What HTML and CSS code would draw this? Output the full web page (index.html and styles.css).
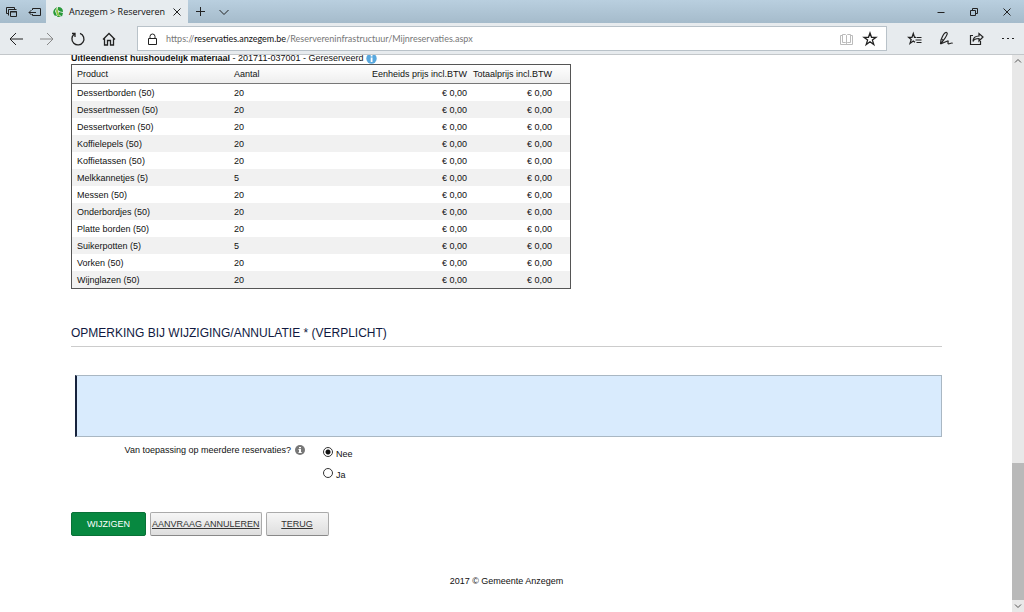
FILE: index.html
```html
<!DOCTYPE html>
<html lang="nl">
<head>
<meta charset="utf-8">
<title>Anzegem &gt; Reserveren</title>
<link rel="stylesheet" href="styles.css">
</head>
<body>
<div class="browser">
  <header class="tabbar">
    <div class="tabtools">
      <button class="icon" aria-label="Tabbladen"><svg width="14" height="14" viewBox="0 0 14 14"><path d="M1.500 8.500V2.500h8M3.500 10.500V4.500h8M3.500 8.500h-2M9.500 2.500v2M5.500 6.500h6v5h-6z"/><path d="M5 7h7"/></svg></button>
      <button class="icon" aria-label="Tabbladen opzij zetten"><svg width="14" height="14" viewBox="0 0 14 14"><path d="M4.500 5V3.500h8v7h-8V9M1 7.500h7M3.500 5L1 7.500 3.500 10"/></svg></button>
    </div>
    <div class="tab">
      <svg class="favicon" width="12" height="12" viewBox="0 0 12 12"><path fill="#28993a" d="M5 1L3 5 5 10 2.500 9.500Q-1 5 5 1zM6 1q5 0 5 5L8 5.500 6 4zM7 6l4 1-1 3.500-3-2zM6 9l3 2H5z"/><path fill="#8dc63f" d="M5 1l1 4 2 6-3-2-1-4z"/></svg>
      <span class="tabtitle">Anzegem &gt; Reserveren</span>
      <button class="icon" aria-label="Tabblad sluiten"><svg width="10" height="10" viewBox="0 0 10 10"><path d="M1.500 1.500l7 7M8.500 1.500l-7 7"/></svg></button>
    </div>
    <div class="tabactions">
      <button class="icon" aria-label="Nieuw tabblad"><svg width="12" height="12" viewBox="0 0 12 12"><path d="M5.500 1v9M1 5.500h9"/></svg></button>
      <button class="icon" aria-label="Tabbladvoorbeelden"><svg width="12" height="12" viewBox="0 0 12 12"><path d="M1.500 4L6 8.500 10.500 4"/></svg></button>
    </div>
    <div class="window-controls">
      <button class="icon" aria-label="Minimaliseren"><svg width="10" height="10" viewBox="0 0 10 10"><path d="M1.500 5.500h7"/></svg></button>
      <button class="icon" aria-label="Verkleinen"><svg width="10" height="10" viewBox="0 0 10 10"><path d="M1.500 3.500h5v5h-5zM3.500 3.500v-2h5v5h-2"/></svg></button>
      <button class="icon" aria-label="Sluiten"><svg width="10" height="10" viewBox="0 0 10 10"><path d="M1.500 1.500l7 7M8.500 1.500l-7 7"/></svg></button>
    </div>
  </header>
  <nav class="toolbar">
    <div class="navbuttons">
      <button class="icon" aria-label="Vorige"><svg width="16" height="16" viewBox="0 0 16 16"><path d="M15 8H2M8 2L2 8l6 6"/></svg></button>
      <button class="icon faded" aria-label="Volgende"><svg width="16" height="16" viewBox="0 0 16 16"><path d="M1 8h13M8 2l6 6-6 6"/></svg></button>
      <button class="icon" aria-label="Vernieuwen"><svg width="16" height="16" viewBox="0 0 16 16"><path stroke-width="1.300" d="M10 2.300a6 6 0 1 1-5.500.700M2 2.500h3V6"/></svg></button>
      <button class="icon" aria-label="Startpagina"><svg width="16" height="16" viewBox="0 0 16 16"><path stroke-width="1.300" d="M2 8.500L8 2.500l6 6M3.500 7v7h3V9.500h3V14h3V7"/></svg></button>
    </div>
    <div class="address">
      <svg class="lock" width="12" height="14" viewBox="0 0 12 14"><path d="M1.500 6.500h8v6h-8zM3 6.500V4.500a2.500 2.500 0 0 1 5 0v2"/></svg>
      <span class="url">https://<b>reservaties.anzegem.be</b>/Reservereninfrastructuur/Mijnreservaties.aspx</span>
      <button class="icon pale" aria-label="Leesweergave"><svg width="16" height="14" viewBox="0 0 16 14"><path d="M7.500 3.500L6.500 2.500h-3v8h3l1 1 1-1h3v-8h-3zM7.500 3.500v8M3.500 3.500h-2v9h12v-9h-2"/></svg></button>
      <button class="icon" aria-label="Favoriet"><svg width="16" height="16" viewBox="0 0 16 16"><path stroke-width="1.300" d="M8 2l1.500 4.300h4.500l-3.600 2.800 1.400 4.400L8 10.800l-3.800 2.700 1.400-4.400L2 6.300h4.500z"/></svg></button>
    </div>
    <div class="hub">
      <button class="icon" aria-label="Hub"><svg width="16" height="16" viewBox="0 0 16 16"><path stroke-width="1.200" d="M9 6.300H7.500L6.300 2.500 5 6.300H1.500l2.700 2.200-1.200 4 3.300-2.500 1.700 1.300M9.500 6.500h5M8.500 9h6M9.500 11.500h5"/></svg></button>
      <button class="icon" aria-label="Webnotitie"><svg width="16" height="16" viewBox="0 0 16 16"><path stroke-width="1.200" d="M2.500 13l.5-4Q6 1 8.500 1.500T5 10l-2.500 3 7-3q1-.5.5 1.500t2 1 2.500 0M4 8.500l2 1"/></svg></button>
      <button class="icon" aria-label="Delen"><svg width="16" height="16" viewBox="0 0 16 16"><path stroke-width="1.200" d="M4 4.500H1.500v9h10V10M4 10.500Q5 7.500 10 7.500V10l4-4-4-3.500V5Q4 5 4 10.500z"/></svg></button>
      <button class="icon" aria-label="Meer"><svg width="16" height="16" viewBox="0 0 16 16"><path stroke="none" fill="#222" d="M2 7h2v1H2zM7 7h2v1H7zM12 7h2v1h-2z"/></svg></button>
    </div>
  </nav>
  <div class="viewport">
    <main class="page">
      <div class="caption"><span><strong>Uitleendienst huishoudelijk materiaal</strong> - 201711-037001 - Gereserveerd</span><svg width="11" height="11" viewBox="0 0 11 11"><circle cx="5.500" cy="5.500" r="5.200" fill="#59a8de"/><path fill="#fff" d="M4.700 2h1.800v1.500H4.700zM4.700 4.500h1.800V9H4.700z"/></svg></div>
      <table class="products">
        <thead><tr><th class="name">Product</th><th class="count">Aantal</th><th class="unit">Eenheids prijs incl.BTW</th><th class="total">Totaalprijs incl.BTW</th></tr></thead>
        <tbody>
          <tr><td>Dessertborden (50)</td><td>20</td><td>€ 0,00</td><td>€ 0,00</td></tr>
          <tr><td>Dessertmessen (50)</td><td>20</td><td>€ 0,00</td><td>€ 0,00</td></tr>
          <tr><td>Dessertvorken (50)</td><td>20</td><td>€ 0,00</td><td>€ 0,00</td></tr>
          <tr><td>Koffielepels (50)</td><td>20</td><td>€ 0,00</td><td>€ 0,00</td></tr>
          <tr><td>Koffietassen (50)</td><td>20</td><td>€ 0,00</td><td>€ 0,00</td></tr>
          <tr><td>Melkkannetjes (5)</td><td>5</td><td>€ 0,00</td><td>€ 0,00</td></tr>
          <tr><td>Messen (50)</td><td>20</td><td>€ 0,00</td><td>€ 0,00</td></tr>
          <tr><td>Onderbordjes (50)</td><td>20</td><td>€ 0,00</td><td>€ 0,00</td></tr>
          <tr><td>Platte borden (50)</td><td>20</td><td>€ 0,00</td><td>€ 0,00</td></tr>
          <tr><td>Suikerpotten (5)</td><td>5</td><td>€ 0,00</td><td>€ 0,00</td></tr>
          <tr><td>Vorken (50)</td><td>20</td><td>€ 0,00</td><td>€ 0,00</td></tr>
          <tr><td>Wijnglazen (50)</td><td>20</td><td>€ 0,00</td><td>€ 0,00</td></tr>
        </tbody>
      </table>
      <form>
        <h2 class="heading"><label for="remark">OPMERKING BIJ WIJZIGING/ANNULATIE * (VERPLICHT)</label></h2>
        <textarea class="remark" id="remark" required></textarea>
        <div class="question" role="radiogroup" aria-labelledby="question">
          <div class="prompt"><span id="question">Van toepassing op meerdere reservaties?</span>
            <svg width="10" height="10" viewBox="0 0 10 10"><circle cx="5" cy="5" r="5" fill="#777"/><path fill="#fff" d="M4 2h2v1.300H4zM3.500 4H6v3h.7v1H3.500V7H4V5h-.5z"/></svg></div>
          <div class="options">
            <label><input type="radio" name="multi" checked><span>Nee</span></label>
            <label><input type="radio" name="multi"><span>Ja</span></label>
          </div>
        </div>
        <div class="actions">
          <button type="button" class="btn primary">WIJZIGEN</button>
          <a href="#" class="btn">AANVRAAG ANNULEREN</a>
          <a href="#" class="btn back">TERUG</a>
        </div>
      </form>
      <footer class="footer">2017 © Gemeente Anzegem</footer>
    </main>
    <div class="scrollbar">
      <svg width="12" height="12" viewBox="0 0 12 12"><path d="M3 7.500l3-3 3 3"/></svg>
      <div class="track"></div>
      <div class="thumb"></div>
      <svg width="12" height="12" viewBox="0 0 12 12"><path d="M3 4.500l3 3 3-3"/></svg>
    </div>
  </div>
</div>
</body>
</html>
```
FILE: styles.css
```css
* { box-sizing: border-box; }
body { margin: 0; background: #fff; color: #111; font: 9px/12px "Liberation Sans", Arial, sans-serif; }
svg { fill: none; stroke: #222; flex: none; display: block; }
button { font: inherit; color: inherit; cursor: pointer; }
.icon { display: flex; padding: 0; border: 0; background: none; }
.browser { display: flex; flex-direction: column; height: 100vh; }

.tabbar { display: flex; flex: none; height: 23px; background: linear-gradient(#b9cfdf, #a5bbcb); }
.tabtools { display: flex; align-items: center; gap: 9px; width: 46px; padding-left: 5px; }
.tab { display: flex; align-items: center; width: 142px; padding: 0 6px; gap: 5px; background: #e7ecef; }
.tabtitle { flex: 1; font: 9px/14px "Open Sans", sans-serif; white-space: nowrap; }
.favicon { stroke: none; }
.tabactions { display: flex; align-items: center; gap: 11px; padding-left: 7px; }
.window-controls { display: flex; align-items: center; gap: 23px; margin-left: auto; padding-right: 12px; }

.toolbar { display: flex; flex: none; align-items: center; height: 32px; background: #e7ebee; border-bottom: 1px solid #c3c7ca; }
.navbuttons { display: flex; gap: 15px; width: 137px; padding-left: 8px; }
.faded svg { stroke: #888; }
.pale svg { stroke: #bbb; }
.address { display: flex; flex: 1; align-items: center; gap: 7px; height: 25px; padding: 0 8px 0 9px; background: #fff; border: 1px solid #b9c2c9; }
.url { flex: 1; color: #777; font: 9px/14px Lato, sans-serif; white-space: nowrap; }
.url b { color: #111; font-weight: 400; }
.hub { display: flex; gap: 15px; padding: 0 8px 0 20px; }

.viewport { display: flex; flex: 1; min-height: 0; overflow: hidden; }
.page { flex: 1; min-width: 0; margin-top: -3px; padding: 0 70px 0 71px; }
.caption { display: flex; align-items: center; gap: 3px; height: 12px; white-space: nowrap; }
.caption svg { stroke: none; }

.products { width: 500px; border: 1px solid #555; border-collapse: separate; border-spacing: 0; table-layout: fixed; }
.products th { height: 19px; padding: 0 0 0 5px; font-weight: 400; text-align: left; background: linear-gradient(#fff, #eee); border-bottom: 1px solid #777; }
.products td { height: 17px; padding: 0 0 0 5px; }
.products tbody tr:nth-child(even) { background: #f1f1f1; }
.products .name { width: 157px; }
.products .count { width: 98px; }
.products .unit { width: 140px; }
.products th:nth-child(n+3), .products td:nth-child(n+3) { padding: 0; text-align: right; }
.products th:last-child, .products td:last-child { padding-right: 18px; }

.heading { margin: 34px 0 28px; padding-bottom: 3px; border-bottom: 1px solid #ccc; color: #10193f; font-size: 12px; font-weight: 400; line-height: 20px; }
.remark { display: block; width: calc(100% - 4px); height: 62px; margin-left: 4px; padding: 4px; resize: none; background: #d9ebfd; border: 1px solid #a9b7c3; border-left: 2px solid #17233d; font: inherit; }
.question { display: flex; padding-top: 7px; }
.prompt { display: flex; align-items: flex-start; justify-content: flex-end; gap: 4px; width: 234px; }
.prompt svg { stroke: none; margin-top: 1px; }
.options { display: flex; flex-direction: column; gap: 9px; padding: 3px 0 0 18px; }
.options label { display: flex; gap: 3px; height: 12px; }
.options span { padding-top: 1px; }
.options input { appearance: none; width: 10px; height: 10px; margin: 0; border: 1px solid #333; border-radius: 50%; background: #fff; }
.options input:checked { background: radial-gradient(circle, #111 2px, #fff 3px); }

.actions { display: flex; gap: 4px; margin-top: 32px; }
.btn { display: flex; align-items: center; justify-content: center; height: 24px; padding: 0 1px; border: 1px solid #aaa; border-bottom-color: #888; border-radius: 2px; background: linear-gradient(#f6f6f6, #dedede); color: #333; white-space: nowrap; }
.primary { min-width: 75px; background: #078840; border-color: #087137; color: #fff; }
.back { min-width: 63px; }
.footer { margin-top: 39px; text-align: center; }

.scrollbar { display: flex; flex-direction: column; flex: none; width: 12px; background: #e8e8e8; }
.scrollbar svg { stroke: #555; }
.track { flex: 396; }
.thumb { flex: 137; background: #b9b9b9; }
```
